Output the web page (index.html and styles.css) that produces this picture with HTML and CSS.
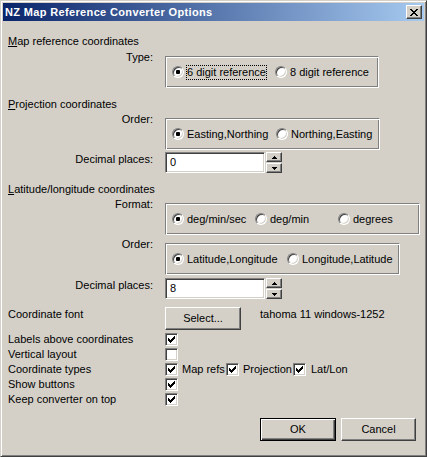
FILE: index.html
```html
<!DOCTYPE html>
<html>
<head>
<meta charset="utf-8">
<title>NZ Map Reference Converter Options</title>
<link rel="stylesheet" href="styles.css">
</head>
<body>
<div class="window">
  <div class="titlebar">
    <span class="title">NZ Map Reference Converter Options</span>
    <span class="close"><svg width="8" height="7" viewBox="0 0 8 7" shape-rendering="crispEdges"><path d="M0 0h2v1H0zM6 0h2v1H6zM1 1h2v1H1zM5 1h2v1H5zM2 2h4v1H2zM3 3h2v1H3zM2 4h4v1H2zM1 5h2v1H1zM5 5h2v1H5zM0 6h2v1H0zM6 6h2v1H6z" fill="#000"/></svg></span>
  </div>
  <div class="client">
    <div class="heading"><u>M</u>ap reference coordinates</div>
    <div class="row row-type">
      <div class="label">Type:</div>
      <div class="group group-map">
        <div class="opt w103"><span class="radio on"></span><span class="txt focus">6 digit reference</span></div>
        <div class="opt"><span class="radio"></span><span class="txt">8 digit reference</span></div>
      </div>
    </div>

    <div class="heading heading-proj"><u>P</u>rojection coordinates</div>
    <div class="row row-order1">
      <div class="label">Order:</div>
      <div class="group group-proj">
        <div class="opt w104"><span class="radio on"></span><span class="txt">Easting,Northing</span></div>
        <div class="opt"><span class="radio"></span><span class="txt">Northing,Easting</span></div>
      </div>
    </div>
    <div class="row row-dec1">
      <div class="label label-edit">Decimal places:</div>
      <div class="spinfield">
        <div class="edit">0</div>
        <div class="spin">
          <span class="spinbtn"><svg width="5" height="3" viewBox="0 0 5 3" shape-rendering="crispEdges"><path d="M2 0h1v1H2zM1 1h3v1H1zM0 2h5v1H0z" fill="#000"/></svg></span>
          <span class="spinbtn"><svg width="5" height="3" viewBox="0 0 5 3" shape-rendering="crispEdges"><path d="M0 0h5v1H0zM1 1h3v1H1zM2 2h1v1H2z" fill="#000"/></svg></span>
        </div>
      </div>
    </div>

    <div class="heading heading-lat"><u>L</u>atitude/longitude coordinates</div>
    <div class="row row-format">
      <div class="label">Format:</div>
      <div class="group group-format">
        <div class="opt w83"><span class="radio on"></span><span class="txt">deg/min/sec</span></div>
        <div class="opt w83"><span class="radio"></span><span class="txt">deg/min</span></div>
        <div class="opt"><span class="radio"></span><span class="txt">degrees</span></div>
      </div>
    </div>
    <div class="row row-order2">
      <div class="label">Order:</div>
      <div class="group group-latorder">
        <div class="opt w115"><span class="radio on"></span><span class="txt">Latitude,Longitude</span></div>
        <div class="opt"><span class="radio"></span><span class="txt">Longitude,Latitude</span></div>
      </div>
    </div>
    <div class="row row-dec2">
      <div class="label label-edit">Decimal places:</div>
      <div class="spinfield">
        <div class="edit">8</div>
        <div class="spin">
          <span class="spinbtn"><svg width="5" height="3" viewBox="0 0 5 3" shape-rendering="crispEdges"><path d="M2 0h1v1H2zM1 1h3v1H1zM0 2h5v1H0z" fill="#000"/></svg></span>
          <span class="spinbtn"><svg width="5" height="3" viewBox="0 0 5 3" shape-rendering="crispEdges"><path d="M0 0h5v1H0zM1 1h3v1H1zM2 2h1v1H2z" fill="#000"/></svg></span>
        </div>
      </div>
    </div>

    <div class="row row-font">
      <div class="label label-left label-btn">Coordinate font</div>
      <div class="fontctl">
        <span class="btn btn-select">Select...</span>
        <span class="fontname">tahoma 11 windows-1252</span>
      </div>
    </div>

    <div class="crow crow-first">
      <div class="label label-left">Labels above coordinates</div>
      <div class="cbline"><span class="cb on"></span></div>
    </div>
    <div class="crow">
      <div class="label label-left">Vertical layout</div>
      <div class="cbline"><span class="cb"></span></div>
    </div>
    <div class="crow">
      <div class="label label-left">Coordinate types</div>
      <div class="cbline">
        <span class="cbitem w61"><span class="cb on"></span><span class="cbtxt">Map refs</span></span>
        <span class="cbitem w67"><span class="cb on"></span><span class="cbtxt">Projection</span></span>
        <span class="cbitem"><span class="cb on"></span><span class="cbtxt cbtxt-wide">Lat/Lon</span></span>
      </div>
    </div>
    <div class="crow">
      <div class="label label-left">Show buttons</div>
      <div class="cbline"><span class="cb on"></span></div>
    </div>
    <div class="crow">
      <div class="label label-left">Keep converter on top</div>
      <div class="cbline"><span class="cb on"></span></div>
    </div>

    <div class="buttons">
      <span class="btn btn-default">OK</span>
      <span class="btn btn-cancel">Cancel</span>
    </div>
  </div>
</div>
</body>
</html>
```

FILE: styles.css
```css
html, body {
  margin: 0;
  padding: 0;
  background: #D4D0C8;
}

body {
  font-family: "Liberation Sans", Arial, sans-serif;
  font-size: 11px;
  line-height: 13px;
  color: #000;
}

.window {
  width: 427px;
  height: 457px;
  box-sizing: border-box;
  background: #D4D0C8;
  border: 1px solid;
  border-color: #D4D0C8 #404040 #404040 #D4D0C8;
  box-shadow: inset 1px 1px #fff, inset -1px -1px #808080;
  padding: 2px;
  display: flex;
  flex-direction: column;
}

.titlebar {
  height: 18px;
  margin-bottom: 1px;
  flex: none;
  display: flex;
  align-items: center;
  justify-content: space-between;
  padding: 0 2px;
  background: linear-gradient(to right, #0A246A, #A6CAF0);
}

.title {
  color: #fff;
  font-weight: bold;
  letter-spacing: 0.35px;
}

.close {
  width: 16px;
  height: 14px;
  box-sizing: border-box;
  display: flex;
  align-items: center;
  justify-content: center;
  background: #D4D0C8;
  border: 1px solid;
  border-color: #fff #404040 #404040 #fff;
  box-shadow: inset -1px -1px #808080;
}

.close svg { display: block; }

.client {
  flex: 1;
  display: flex;
  flex-direction: column;
  padding: 13px 8px 13px 5px;
}

.heading { height: 13px; }
.heading-proj { margin-top: 10px; }
.heading-lat { margin-top: 10px; }

.row {
  display: grid;
  grid-template-columns: 145px auto;
  column-gap: 12px;
  align-items: start;
}

.row-type { margin-top: 3px; }
.row-order1 { margin-top: 2px; }
.row-dec1 { margin-top: 2px; }
.row-format { margin-top: 2px; }
.row-order2 { margin-top: 3px; }
.row-dec2 { margin-top: 3px; }
.row-font { margin-top: 8px; }

.label { text-align: right; white-space: nowrap; }
.label-left { text-align: left; }
.label-edit { margin-top: 1px; }
.label-btn { margin-top: 1px; }

.group {
  margin-top: 5px;
  height: 32px;
  box-sizing: border-box;
  border: 1px solid;
  border-color: #808080 #fff #fff #808080;
  box-shadow: inset 1px 1px #fff, inset -1px -1px #808080;
  display: flex;
  align-items: center;
  padding-left: 6px;
}

.group-map { width: 214px; }
.group-proj { width: 215px; }
.group-format { width: 255px; }
.group-latorder { width: 235px; }

.opt {
  display: flex;
  align-items: center;
  white-space: nowrap;
}

.w83 { width: 83px; }
.w103 { width: 103px; }
.w104 { width: 104px; }
.w115 { width: 115px; }

.radio {
  position: relative;
  width: 12px;
  height: 12px;
  box-sizing: border-box;
  border-radius: 50%;
  background: #fff;
  border: 1px solid;
  border-color: #808080 #fff #fff #808080;
  box-shadow: inset 1px 1px #404040, inset -1px -1px #D4D0C8;
  flex: none;
}

.radio.on::after {
  content: "";
  position: absolute;
  left: 3px;
  top: 3px;
  width: 4px;
  height: 4px;
  border-radius: 1px;
  background: #000;
}

.txt {
  margin-left: 2px;
  border: 1px dotted transparent;
  line-height: 13px;
}

.txt.focus { border-color: #000; }

.spinfield {
  display: flex;
  align-items: flex-start;
}

.edit {
  width: 100px;
  height: 21px;
  box-sizing: border-box;
  background: #fff;
  border: 1px solid;
  border-color: #808080 #fff #fff #808080;
  box-shadow: inset 1px 1px #404040, inset -1px -1px #D4D0C8;
  padding-left: 4px;
  line-height: 19px;
}

.spin {
  margin-left: 1px;
  width: 16px;
  height: 21px;
  display: flex;
  flex-direction: column;
  justify-content: space-between;
}

.spinbtn {
  height: 10px;
  box-sizing: border-box;
  display: flex;
  align-items: center;
  justify-content: center;
  background: #D4D0C8;
  border: 1px solid;
  border-color: #fff #404040 #404040 #fff;
  box-shadow: inset -1px -1px #808080;
}

.spinbtn svg { display: block; }

.fontctl {
  display: flex;
  align-items: flex-start;
}

.btn {
  display: flex;
  align-items: center;
  justify-content: center;
  height: 23px;
  box-sizing: border-box;
  background: #D4D0C8;
  border: 1px solid;
  border-color: #fff #404040 #404040 #fff;
  box-shadow: inset -1px -1px #808080;
}

.btn-select { width: 76px; }

.fontname {
  margin-left: 19px;
  margin-top: 1px;
}

.crow {
  display: grid;
  grid-template-columns: 145px auto;
  column-gap: 12px;
  height: 15px;
}

.crow-first { margin-top: 3px; }

.cbline {
  display: flex;
  align-items: flex-start;
}

.cbitem {
  display: flex;
  align-items: flex-start;
  white-space: nowrap;
}

.w61 { width: 61px; }
.w67 { width: 67px; }

.cb {
  position: relative;
  width: 13px;
  height: 13px;
  box-sizing: border-box;
  background: #fff;
  border: 1px solid;
  border-color: #808080 #fff #fff #808080;
  box-shadow: inset 1px 1px #404040, inset -1px -1px #D4D0C8;
  flex: none;
}

.cb.on::after {
  content: "";
  position: absolute;
  left: 2px;
  top: 2px;
  width: 7px;
  height: 7px;
  background: url("data:image/svg+xml,%3Csvg xmlns='http://www.w3.org/2000/svg' width='7' height='7' viewBox='0 0 7 7' shape-rendering='crispEdges'%3E%3Cpath d='M0 2h1v3H0zM1 3h1v3H1zM2 4h1v3H2zM3 3h1v3H3zM4 2h1v3H4zM5 1h1v3H5zM6 0h1v3H6z' fill='%23000'/%3E%3C/svg%3E") no-repeat;
}

.cbtxt { margin-left: 4px; }
.cbtxt-wide { margin-left: 5px; }

.buttons {
  margin-top: auto;
  display: flex;
  justify-content: flex-end;
  gap: 5px;
}

.btn-default {
  width: 76px;
  border-color: #000;
  box-shadow: inset 1px 1px #fff, inset -1px -1px #404040, inset -2px -2px #808080;
}

.btn-cancel { width: 75px; }
```
